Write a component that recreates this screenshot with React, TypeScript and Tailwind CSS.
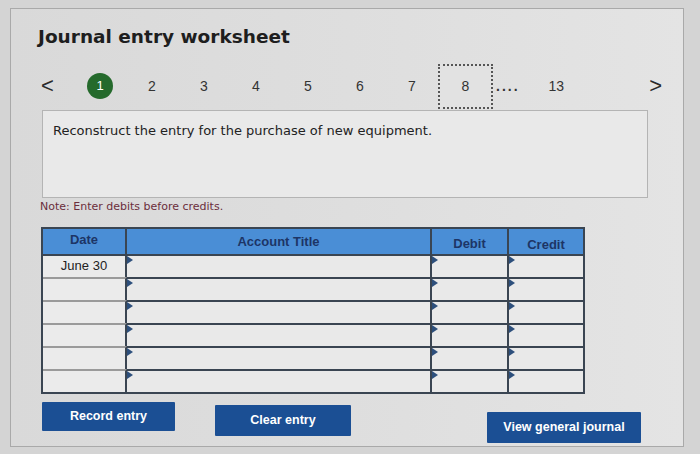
import React from "react";

const steps = ["2", "3", "4", "5", "6", "7"];
const rows = ["June 30", "", "", "", "", ""];

const Marker = () => (
  <span className="absolute left-0 top-0 w-0 h-0 border-t-[4px] border-b-[4px] border-l-[6px] border-t-transparent border-b-transparent border-l-[#2d4f7c]" />
);

const App = () => {
  return (
    <div className="w-[700px] h-[454px] bg-[#d4d4d4] overflow-hidden font-['Liberation_Sans',Arial,sans-serif]">
      <div className="ml-[10px] mt-[8px] w-[674px] h-[439px] border border-[#a9a9a9] bg-gradient-to-r from-[#d9d9d9] via-[#dedede] to-[#e4e4e4]">
        <h1 className="ml-[27px] mt-[16px] text-[18.5px] font-bold text-[#1e1e1e] font-['DejaVu_Sans',Verdana,sans-serif] leading-[24px]">
          Journal entry worksheet
        </h1>

        <div className="mt-[14px] flex items-center h-[46px]">
          <span className="ml-[30px] w-[16px] text-[22px] text-[#2a2a2a] leading-none">&lt;</span>
          <div className="ml-[30px] w-[26px] h-[26px] rounded-full bg-[#256a2c] text-white text-[13px] flex items-center justify-center">
            1
          </div>
          <div className="ml-[13px] flex">
            {steps.map((s) => (
              <span key={s} className="w-[52px] text-center text-[14px] text-[#333]">
                {s}
              </span>
            ))}
          </div>
          <div className="w-[55px] h-[45px] border-2 border-dotted border-[#555] bg-[#e2e2e2] flex items-center justify-center text-[14px] text-[#333]">
            8
          </div>
          <span className="ml-[3px] text-[14px] font-bold text-[#333] tracking-[2px]">....</span>
          <span className="ml-[29px] text-[14px] text-[#333]">13</span>
          <span className="ml-[85px] text-[22px] text-[#2a2a2a] leading-none">&gt;</span>
        </div>

        <div className="ml-[31px] mt-[1px] w-[606px] h-[88px] border border-[#b4b4b4] bg-[#e9e9e9] px-[10px] pt-[10px]">
          <p className="text-[13px] text-[#222] font-['DejaVu_Sans',Verdana,sans-serif]">
            Reconstruct the entry for the purchase of new equipment.
          </p>
        </div>

        <p className="ml-[29px] mt-[1px] text-[11px] text-[#6b2e3c] font-['DejaVu_Sans',Verdana,sans-serif]">
          Note: Enter debits before credits.
        </p>

        <div className="ml-[30px] mt-[11px] w-[544px] border-2 border-[#3a4552]">
          <div className="grid grid-cols-[84px_305px_77px_1fr] h-[25px] bg-[#4a8ed6] text-[13px] font-bold text-[#1d3566]">
            <div className="flex items-center justify-center border-r-2 border-[#3a4552] pb-[4px]">Date</div>
            <div className="flex items-center justify-center border-r-2 border-[#3a4552]">Account Title</div>
            <div className="flex items-center justify-center border-r-2 border-[#3a4552] pt-[4px]">Debit</div>
            <div className="flex items-center justify-center pt-[6px]">Credit</div>
          </div>
          {rows.map((d, i) => (
            <div key={i} className="grid grid-cols-[84px_305px_77px_1fr] h-[23px] bg-[#e9e9e9]">
              <div
                className={`flex items-center justify-center border-r-2 border-r-[#3a4552] text-[13px] text-[#222] bg-[#ebebeb] ${
                  i === 0 ? "border-t-2 border-t-[#3a4552]" : "border-t-2 border-t-[#9a9a9a]"
                }`}
              >
                {d}
              </div>
              <div className="relative border-r-2 border-t-2 border-[#3a4552]">
                <Marker />
              </div>
              <div className="relative border-r-2 border-t-2 border-[#3a4552]">
                <Marker />
              </div>
              <div className="relative border-t-2 border-[#3a4552]">
                <Marker />
              </div>
            </div>
          ))}
        </div>

        <div className="mt-[8px] flex items-start">
          <button className="ml-[31px] w-[133px] h-[29px] bg-[#1b4f94] text-white text-[12.5px] font-bold rounded-[1px]">
            Record entry
          </button>
          <button className="ml-[40px] mt-[3px] w-[136px] h-[31px] bg-[#1b4f94] text-white text-[12.5px] font-bold rounded-[1px]">
            Clear entry
          </button>
          <button className="ml-[136px] mt-[10px] w-[154px] h-[31px] bg-[#1b4f94] text-white text-[12.5px] font-bold rounded-[1px]">
            View general journal
          </button>
        </div>
      </div>
    </div>
  );
};

export default App;
